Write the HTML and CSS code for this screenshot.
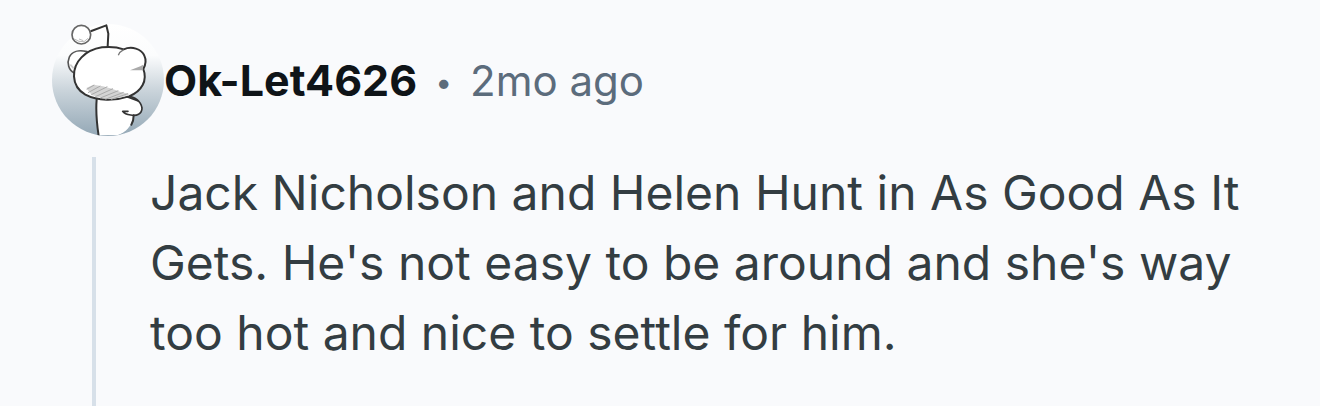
FILE: index.html
```html
<!DOCTYPE html>
<html lang="en">
<head>
<meta charset="utf-8">
<title>Comment by Ok-Let4626</title>
<link rel="stylesheet" href="styles.css">
</head>
<body>
<article class="comment">
  <header class="comment-header">
    <svg class="avatar" viewBox="24 24 336 336" aria-hidden="true">
      <defs>
        <linearGradient id="shade" x1="0" y1="0" x2="0" y2="1">
          <stop offset="0" stop-color="#fff"/>
          <stop offset=".28" stop-color="#fbfcfd"/>
          <stop offset=".6" stop-color="#c9d3da"/>
          <stop offset="1" stop-color="#94a8b6"/>
        </linearGradient>
        <clipPath id="disc"><circle cx="192" cy="192" r="168"/></clipPath>
      </defs>
      <g clip-path="url(#disc)">
        <rect x="24" y="24" width="336" height="336" fill="url(#shade)"/>
        <g fill="#fff" stroke="#333" stroke-width="6" stroke-linecap="round" stroke-linejoin="round">
          <path d="M158 246C155 280 158 320 163 358L222 357C246 349 263 332 269 298L262 240Z" stroke="none"/>
          <path d="M158 250C155 285 158 320 164 360" fill="none"/>
          <path d="M250 241C272 240 291 257 294 276C294 294 278 301 260 297C249 296 240 292 236 286L252 286" stroke-width="5"/>
          <path d="M249 242L281 254" fill="none"/>
          <path d="M269 298C269 309 267 318 262 326" fill="none"/>
        </g>
      </g>
      <g fill="#fff" stroke="#333" stroke-width="6" stroke-linecap="round" stroke-linejoin="round">
        <path d="M91 171C74 163 68 141 76 123C84 106 105 101 129 107" stroke="#555" stroke-width="5"/>
        <path d="M90 181C88 137 124 102 174 94C199 91 222 94 239 100C263 90 292 98 301 119C308 134 304 148 298 159C311 193 294 225 255 241C213 255 162 256 124 236C102 223 91 204 90 181Z"/>
        <path d="M191 91L193 53L187 28L142 45" fill="none"/>
        <circle cx="112" cy="56" r="28" stroke="#666" stroke-width="5"/>
      </g>
      <path d="M239 101C231 105 226 110 223 118" fill="none" stroke="#777" stroke-width="4"/>
      <path d="M297 146L289 151L258 163L296 163Z" fill="#aaa"/>
      <path d="M127 216L148 206L177 211L204 218L230 228L257 234L240 242L205 249L174 247L143 237Z" fill="#d4d4d4"/>
      <path d="M128 220L151 207M132 230L169 210M142 236L190 212M154 242L207 218M169 246L223 224M184 250L239 229M201 250L252 233" fill="none" stroke="#aaa" stroke-width="3"/>
      <path d="M91 69L105 76L120 77L132 67M105 69L118 74" fill="none" stroke="#bbb" stroke-width="3"/>
      <path d="M79 146L89 157" stroke="#ccc" stroke-width="5"/>
    </svg>
    <a class="author" href="#">Ok-Let4626</a>
    <span class="dot">•</span>
    <time class="age">2mo ago</time>
  </header>
  <div class="thread">
    <p class="text">Jack Nicholson and Helen Hunt in As Good As It Gets. He's not easy to be around and she's way too hot and nice to settle for him.</p>
  </div>
</article>
</body>
</html>
```
FILE: styles.css
```css
body { margin: 0; background: #f9fafc; font-family: Inter, sans-serif; }
.comment { display: flex; flex-direction: column; min-height: 100vh; box-sizing: border-box; padding: 24px 52px 0; gap: 21px; }
.comment-header { display: flex; align-items: center; }
.avatar { width: 112px; height: 112px; overflow: visible; }
.author { color: #0f1418; font-size: 43px; font-weight: 700; text-decoration: none; }
.dot { margin: 4px 18px 0; font-size: 30px; color: #5c6c7c; }
.age { font-size: 42px; color: #5c6c7c; }
.thread { flex: 1; margin-left: 40px; border-left: 4px solid #d7e0e9; padding: 1px 0 0 54px; }
.text { margin: 0; font-size: 48px; line-height: 70px; color: #333d42; }
```
